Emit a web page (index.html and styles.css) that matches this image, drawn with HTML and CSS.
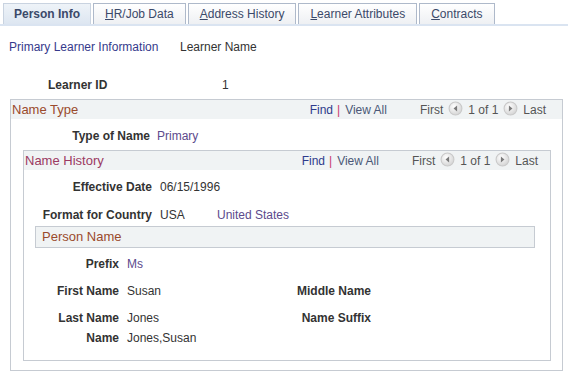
FILE: index.html
```html
<!DOCTYPE html>
<html lang="en">
  <head>
    <meta charset="UTF-8" />
    <title>Person Info</title>
    <link rel="stylesheet" href="styles.css">
  </head>
  <body>
    <div class="tabs">
      <div class="tab tab-active">Person Info</div>
      <div class="tab"><u>H</u>R/Job Data</div>
      <div class="tab"><u>A</u>ddress History</div>
      <div class="tab"><u>L</u>earner Attributes</div>
      <div class="tab"><u>C</u>ontracts</div>
    </div>

    <div class="page-head">
      <span class="page-link">Primary Learner Information</span>
      <span>Learner Name</span>
    </div>

    <div class="learner-id">
      <span class="label">Learner ID</span>
      <span>1</span>
    </div>

    <div class="box box-outer">
      <div class="box-head">
        <span class="box-title">Name Type</span>
        <div class="nav">
          <span class="find">Find</span><span class="sep">|</span><span class="view-all">View All</span>
          <span class="first">First</span>
          <svg class="arrow" viewBox="0 0 14 14"><circle cx="7" cy="7" r="6" fill="url(#g1)" stroke="#c9c9c9"/><path d="M8.5 4.2 L5.2 7 L8.5 9.8 Z" fill="#7a7a7a"/></svg>
          <span>1 of 1</span>
          <svg class="arrow" viewBox="0 0 14 14"><circle cx="7" cy="7" r="6" fill="url(#g1)" stroke="#c9c9c9"/><path d="M5.5 4.2 L8.8 7 L5.5 9.8 Z" fill="#7a7a7a"/></svg>
          <span>Last</span>
        </div>
      </div>

      <div class="type-row">
        <span class="label">Type of Name</span>
        <span class="value-alt">Primary</span>
      </div>

      <div class="box box-inner">
        <div class="box-head">
          <span class="box-title title-alt">Name History</span>
          <div class="nav">
            <span class="find">Find</span><span class="sep">|</span><span class="view-all">View All</span>
            <span class="first">First</span>
            <svg class="arrow" viewBox="0 0 14 14"><circle cx="7" cy="7" r="6" fill="url(#g1)" stroke="#c9c9c9"/><path d="M8.5 4.2 L5.2 7 L8.5 9.8 Z" fill="#7a7a7a"/></svg>
            <span>1 of 1</span>
            <svg class="arrow" viewBox="0 0 14 14"><circle cx="7" cy="7" r="6" fill="url(#g1)" stroke="#c9c9c9"/><path d="M5.5 4.2 L8.8 7 L5.5 9.8 Z" fill="#7a7a7a"/></svg>
            <span>Last</span>
          </div>
        </div>

        <div class="history-grid">
          <span class="label">Effective Date</span>
          <span>06/15/1996</span>
          <span></span>
          <span class="label">Format for Country</span>
          <span>USA</span>
          <span class="value-alt">United States</span>
        </div>

        <div class="person-bar">Person Name</div>

        <div class="person-grid">
          <span class="label">Prefix</span>
          <span class="value-alt">Ms</span>
          <span></span>
          <span></span>
          <span class="label">First Name</span>
          <span>Susan</span>
          <span class="label">Middle Name</span>
          <span></span>
          <span class="label">Last Name</span>
          <span>Jones</span>
          <span class="label">Name Suffix</span>
          <span></span>
          <span class="label">Name</span>
          <span>Jones,Susan</span>
        </div>
      </div>
    </div>

    <svg width="0" height="0" style="position:absolute">
      <defs>
        <radialGradient id="g1" cx="0.4" cy="0.35" r="0.7">
          <stop offset="0" stop-color="#ffffff"/>
          <stop offset="1" stop-color="#d2d2d2"/>
        </radialGradient>
      </defs>
    </svg>
  </body>
</html>
```

FILE: styles.css
```css
body {
  margin: 0;
  font-family: "Liberation Sans", Arial, sans-serif;
  font-size: 12px;
  color: #333;
  background: #fff;
}
.tabs {
  display: flex;
  gap: 2px;
  padding: 3px 0 0 3px;
  border-bottom: 2px solid #dae4f1;
}
.tab {
  height: 21px;
  line-height: 21px;
  padding: 0 11px;
  border: 1px solid #aeb9ca;
  border-bottom: none;
  background: linear-gradient(#ffffff, #eef0f3);
  color: #3b4969;
  box-sizing: border-box;
}
.tab u {
  text-decoration: underline;
}
.tab-active {
  padding: 0 10px;
  font-weight: bold;
  background: linear-gradient(#eef3f8, #dde6f1);
  border-color: #c9d3e0;
}
.page-head {
  display: grid;
  grid-template-columns: 171px auto;
  padding: 14px 9px 0;
  line-height: 14px;
}
.page-link {
  color: #363a8c;
}
.learner-id {
  display: grid;
  grid-template-columns: 174px auto;
  padding-left: 48px;
  margin-top: 24px;
  line-height: 14px;
}
.label {
  font-weight: bold;
  color: #333;
  text-align: right;
}
.learner-id .label {
  text-align: left;
}
.value-alt {
  color: #5c4a8c;
}
.box {
  border: 1px solid #c6cbd2;
}
.box-outer {
  margin: 7px 5px 0 10px;
}
.box-inner {
  margin: 0 11px 9px 12px;
  padding-bottom: 15px;
}
.box-head {
  display: flex;
  justify-content: space-between;
  align-items: center;
  height: 19px;
  background: #f0f3f4;
  padding: 0 16px 0 1px;
}
.box-inner .box-head {
  padding-right: 12px;
}
.box-title {
  font-size: 13px;
  color: #9a4a2c;
}
.title-alt {
  color: #9b3a62;
}
.nav {
  display: flex;
  align-items: center;
  color: #555;
}
.find {
  color: #2e3a8c;
}
.sep {
  color: #c8386e;
  margin: 0 5px 0 4px;
}
.view-all {
  color: #4b5877;
}
.first {
  margin-left: 33px;
}
.arrow {
  width: 15px;
  height: 15px;
  margin: -2px 5px 0 5px;
}
.type-row {
  display: grid;
  grid-template-columns: 139px auto;
  column-gap: 7px;
  padding: 10px 0 7px;
  line-height: 14px;
}
.history-grid {
  display: grid;
  grid-template-columns: 128px 49px auto;
  column-gap: 8px;
  row-gap: 14px;
  padding-top: 10px;
  margin-bottom: 4px;
  line-height: 14px;
}
.person-bar {
  margin: 0 15px 0 11px;
  height: 20px;
  line-height: 20px;
  padding-left: 6px;
  border: 1px solid #c6cbd2;
  background: #f0f3f4;
  font-size: 13px;
  color: #9a4a2c;
}
.person-grid {
  display: grid;
  grid-template-columns: 95px 160px 76px auto;
  grid-template-rows: 27px 27px 27px 14px;
  column-gap: 8px;
  align-items: center;
  margin-top: 2px;
  line-height: 14px;
}
```
